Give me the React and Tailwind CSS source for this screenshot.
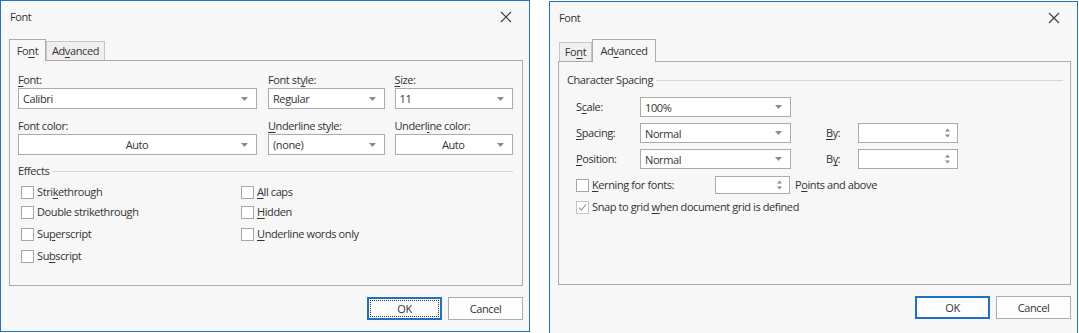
import React from "react";

const U = ({ children }) => (
  <span className="underline decoration-[1px] underline-offset-[2px]">{children}</span>
);

function Arrow() {
  return (
    <svg width="7" height="4" viewBox="0 0 7 4" className="shrink-0">
      <path d="M0 0H7L3.5 4Z" fill="#8a8a8a" />
    </svg>
  );
}

function Combo({ value, center, className = "" }) {
  return (
    <div
      className={`flex items-center bg-white border border-[#ababab] pl-[4px] pr-[8px] ${className}`}
    >
      <div className={`flex-1 text-[#333] leading-none ${center ? "text-center pl-[10px]" : ""}`}>
        {value}
      </div>
      <Arrow />
    </div>
  );
}

function Spin({ className = "" }) {
  return (
    <div className={`flex items-center justify-end bg-white border border-[#ababab] pr-[6px] ${className}`}>
      <svg width="7" height="12" viewBox="0 0 7 12">
        <path d="M1 4.5H6L3.5 1.5Z" fill="#8a8a8a" />
        <path d="M1 7.5H6L3.5 10.5Z" fill="#8a8a8a" />
      </svg>
    </div>
  );
}

function Check({ checked }) {
  return (
    <div className={`w-[13px] h-[13px] bg-white border ${checked ? "border-[#c4c4c4]" : "border-[#a6a6a6]"} flex items-center justify-center shrink-0`}>
      {checked && (
        <svg width="11" height="11" viewBox="0 0 11 11">
          <path d="M2 5.5L4.3 8L9 2.5" fill="none" stroke="#8c8c8c" strokeWidth="1.1" />
        </svg>
      )}
    </div>
  );
}

function CheckRow({ children, checked, className = "" }) {
  return (
    <div className={`flex items-center h-[20px] ${className}`}>
      <Check checked={checked} />
      <span className="ml-[3px] text-[#333]">{children}</span>
    </div>
  );
}

function CloseX() {
  return (
    <svg width="12" height="12" viewBox="0 0 12 12">
      <path d="M1 1L11 11M11 1L1 11" stroke="#3a3a3a" strokeWidth="1.1" />
    </svg>
  );
}

function Buttons({ focused }) {
  return (
    <div className="flex justify-end gap-[6px] mt-[11px]">
      <div className="w-[75px] h-[23px] border-2 border-[#1f6fc5] bg-[#fdfdfd] p-[1px]">
        <div
          className={`w-full h-full flex items-center justify-center text-[#333] ${
            focused ? "border border-dotted border-[#333]" : ""
          }`}
        >
          OK
        </div>
      </div>
      <div className="w-[75px] h-[23px] border border-[#adadad] bg-[#fdfdfd] flex items-center justify-center text-[#333]">
        Cancel
      </div>
    </div>
  );
}

function Dialog({ className = "", tabs, children, focused }) {
  return (
    <div
      className={`bg-[#f7f7f7] border border-[#2370c6] flex flex-col ${className}`}
    >
      <div className="h-[31px] flex items-center justify-between pl-[9px] pr-[17px] pt-[1px]">
        <span className="text-[#333]">Font</span>
        <CloseX />
      </div>
      <div className="pl-[8px] pr-[6px] pt-[7px] flex flex-col">
        <div className="flex items-end h-[21px]">{tabs}</div>
        {children}
        <Buttons focused={focused} />
      </div>
    </div>
  );
}

function ActiveTab({ children, className = "" }) {
  return (
    <div
      className={`relative z-10 -mb-[1px] h-[22px] border border-b-0 border-[#acacac] bg-[#f7f7f7] flex items-center justify-center text-[#333] ${className}`}
    >
      {children}
    </div>
  );
}

function InactiveTab({ children, className = "" }) {
  return (
    <div
      className={`h-[19px] border border-b-0 border-[#c6c6c6] bg-[#efefef] flex items-center justify-center text-[#333] ${className}`}
    >
      {children}
    </div>
  );
}

function Label({ children, className = "" }) {
  return <div className={`h-[16px] leading-[16px] text-[#333] ${className}`}>{children}</div>;
}

function FontPanel() {
  return (
    <div className="h-[226px] border border-[#acacac] pl-[8px] pr-[9px] pt-[11px]">
      <div className="flex gap-[10px]">
        <div className="w-[240px]">
          <Label><U>F</U>ont:</Label>
          <Combo value="Calibri" className="h-[21px]" />
        </div>
        <div className="w-[117px] ml-[1px]">
          <Label>Font st<U>y</U>le:</Label>
          <Combo value="Regular" className="h-[21px]" />
        </div>
        <div className="w-[119px]">
          <Label><U>S</U>ize:</Label>
          <Combo value="11" className="h-[21px]" />
        </div>
      </div>
      <div className="flex gap-[10px] mt-[9px]">
        <div className="w-[240px]">
          <Label>Font color:</Label>
          <Combo value="Auto" center className="h-[21px]" />
        </div>
        <div className="w-[117px] ml-[1px]">
          <Label><U>U</U>nderline style:</Label>
          <Combo value="(none)" className="h-[21px]" />
        </div>
        <div className="w-[119px]">
          <Label>Underl<U>i</U>ne color:</Label>
          <Combo value="Auto" center className="h-[21px]" />
        </div>
      </div>
      <div className="flex items-center mt-[8px] h-[16px]">
        <span className="text-[#333]">Effects</span>
        <div className="flex-1 h-px bg-[#d6d6d6] ml-[3px]" />
      </div>
      <div className="flex mt-[3px]">
        <div className="w-[223px] pl-[3px]">
          <CheckRow>Stri<U>k</U>ethrough</CheckRow>
          <CheckRow>Double strikethrou<U>g</U>h</CheckRow>
          <CheckRow className="mt-[2px]">Su<U>p</U>erscript</CheckRow>
          <CheckRow className="mt-[2px]">Su<U>b</U>script</CheckRow>
        </div>
        <div>
          <CheckRow><U>A</U>ll caps</CheckRow>
          <CheckRow><U>H</U>idden</CheckRow>
          <CheckRow className="mt-[2px]"><U>U</U>nderline words only</CheckRow>
        </div>
      </div>
    </div>
  );
}

function AdvancedPanel() {
  return (
    <div className="h-[224px] border border-[#acacac] pl-[8px] pr-[7px] pt-[10px]">
      <div className="flex items-center h-[16px]">
        <span className="text-[#333]">Character Spacing</span>
        <div className="flex-1 h-px bg-[#d6d6d6] ml-[3px]" />
      </div>
      <div className="pl-[9px] mt-[9px]">
        <div className="flex items-center h-[20px]">
          <span className="w-[64px] text-[#333]">S<U>c</U>ale:</span>
          <Combo value="100%" className="w-[151px] h-[20px]" />
        </div>
        <div className="flex items-center h-[20px] mt-[6px]">
          <span className="w-[64px] text-[#333]"><U>S</U>pacing:</span>
          <Combo value="Normal" className="w-[151px] h-[20px]" />
          <span className="ml-[35px] w-[32px] text-[#333]"><U>B</U>y:</span>
          <Spin className="w-[100px] h-[20px]" />
        </div>
        <div className="flex items-center h-[20px] mt-[6px]">
          <span className="w-[64px] text-[#333]"><U>P</U>osition:</span>
          <Combo value="Normal" className="w-[151px] h-[20px]" />
          <span className="ml-[35px] w-[32px] text-[#333]">B<U>y</U>:</span>
          <Spin className="w-[100px] h-[20px]" />
        </div>
        <div className="flex items-center h-[18px] mt-[7px]">
          <div className="w-[139px] flex items-center">
            <Check />
            <span className="ml-[3px] text-[#333]"><U>K</U>erning for fonts:</span>
          </div>
          <Spin className="w-[75px] h-[18px]" />
          <span className="ml-[5px] text-[#333]">P<U>o</U>ints and above</span>
        </div>
        <div className="flex items-center h-[20px] mt-[3px]">
          <Check checked />
          <span className="ml-[3px] text-[#333]">Snap to grid <U>w</U>hen document grid is defined</span>
        </div>
      </div>
    </div>
  );
}

export default function App() {
  return (
    <div
      className="w-[1079px] h-[333px] bg-white flex items-start overflow-hidden text-[11px] leading-[16px] tracking-[-0.4px]"
      style={{ fontFamily: '"Open Sans", "Noto Sans", sans-serif' }}
    >
      <Dialog
        className="w-[530px] h-[332px]"
        focused
        tabs={
          <>
            <ActiveTab className="w-[37px]">
              <span>Fo<U>n</U>t</span>
            </ActiveTab>
            <InactiveTab className="w-[59px]">
              <span>Ad<U>v</U>anced</span>
            </InactiveTab>
          </>
        }
      >
        <FontPanel />
      </Dialog>
      <Dialog
        className="w-[529px] h-[340px] ml-[19px] mt-[1px]"
        tabs={
          <>
            <div className="w-[1px]" />
            <InactiveTab className="w-[33px]">
              <span>Fo<U>n</U>t</span>
            </InactiveTab>
            <ActiveTab className="w-[64px] h-[23px]">
              <span>Ad<U>v</U>anced</span>
            </ActiveTab>
          </>
        }
      >
        <AdvancedPanel />
      </Dialog>
    </div>
  );
}
